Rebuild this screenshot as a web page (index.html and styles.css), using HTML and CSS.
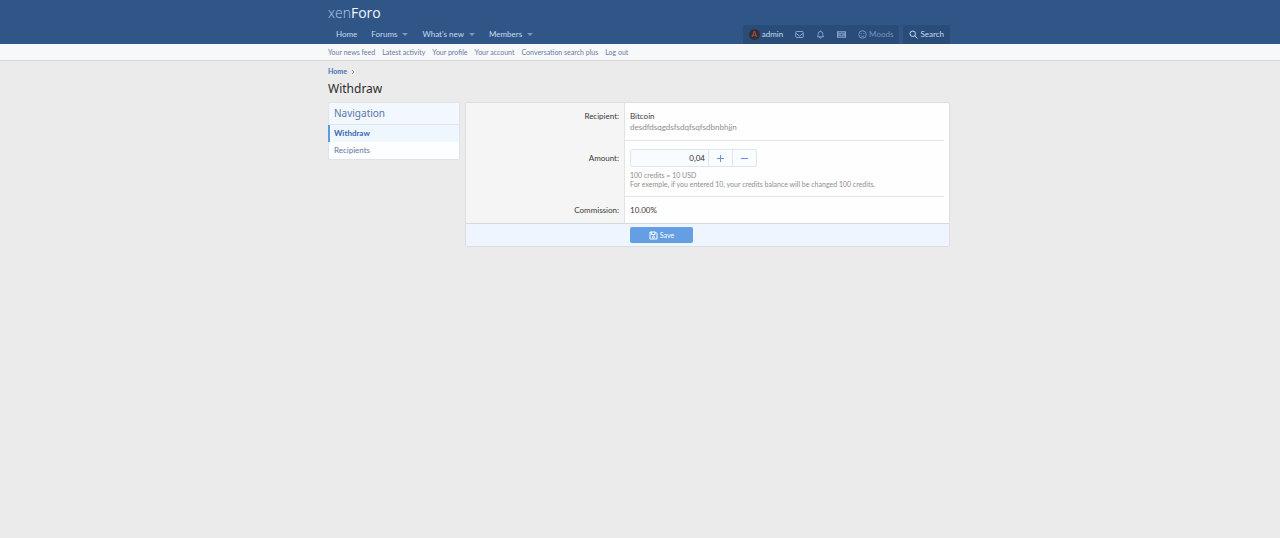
FILE: index.html
```html
<!DOCTYPE html>
<html lang="en">
<head>
<meta charset="utf-8">
<meta name="viewport" content="width=device-width, initial-scale=1">
<title>Withdraw</title>
<link rel="stylesheet" href="styles.css">
</head>
<body>
<header class="header">
  <div class="inner">
    <a class="logo" href="#"><span class="logo-thin">xen</span>Foro</a>
    <div class="nav-row">
      <nav class="nav">
        <a href="#">Home</a>
        <a href="#">Forums<i class="caret"></i></a>
        <a href="#">What's new<i class="caret"></i></a>
        <a href="#">Members<i class="caret"></i></a>
      </nav>
      <div class="tools">
        <div class="tool-group">
          <a class="tool tool-user" href="#"><span class="avatar">A</span>admin</a>
          <a class="tool" href="#" aria-label="Inbox"><svg class="icon" viewBox="0 0 18 18"><rect x="1.5" y="3" width="15" height="12" rx="1.5"/><path d="M1.5 6.5 9 12l7.500-5.500"/></svg></a>
          <a class="tool" href="#" aria-label="Alerts"><svg class="icon" viewBox="0 0 18 18"><path d="M2.500 13.500h13c-1.500-1.500-2-3-2-6a4.500 4.500 0 0 0-9 0c0 3-.5 4.500-2 6zM9 1v2M7 14.500a2 2 0 0 0 4 0"/></svg></a>
          <a class="tool" href="#" aria-label="Credits"><svg class="icon" viewBox="0 0 18 18"><rect x="1" y="3.500" width="16" height="11"/><rect x="6" y="6.500" width="6" height="5"/><path d="M3.500 5v8M14.500 5v8"/></svg></a>
          <a class="tool tool-mood" href="#"><svg class="icon" viewBox="0 0 18 18"><circle cx="9" cy="9" r="7.500"/><path d="M6.300 6v2M11.700 6v2M5.500 11c1.500 2.500 5.500 2.500 7 0"/></svg>Moods</a>
        </div>
        <a class="tool tool-search" href="#"><svg class="icon" viewBox="0 0 18 18"><circle cx="7.500" cy="7.500" r="5.500"/><path d="m11.500 11.500 5.500 5.500"/></svg>Search</a>
      </div>
    </div>
  </div>
</header>
<div class="subnav">
  <nav class="inner subnav-list">
    <a href="#">Your news feed</a>
    <a href="#">Latest activity</a>
    <a href="#">Your profile</a>
    <a href="#">Your account</a>
    <a href="#">Conversation search plus</a>
    <a href="#">Log out</a>
  </nav>
</div>
<main class="inner">
  <nav class="crumbs"><a href="#">Home</a><svg class="crumb-arrow" viewBox="0 0 4 6"><path d="m1 1 2 2-2 2"/></svg></nav>
  <h1 class="title">Withdraw</h1>
  <div class="columns">
    <aside class="side">
      <h2 class="side-title">Navigation</h2>
      <a class="side-link side-link-on" href="#">Withdraw</a>
      <a class="side-link" href="#">Recipients</a>
    </aside>
    <form class="form">
      <div class="row">
        <div class="label">Recipient:</div>
        <div class="value"><div>Bitcoin</div><div class="muted">desdfdsqgdsfsdqfsqfsdbnbhjjn</div></div>
      </div>
      <div class="row">
        <label class="label label-field" for="amount">Amount:</label>
        <div class="value">
          <div class="stepper">
            <input id="amount" type="text" value="0,04">
            <button type="button" aria-label="Increase"><svg class="sign" viewBox="0 0 7 7"><path d="M0 3.500h7M3.500 0v7"/></svg></button>
            <button type="button" aria-label="Decrease"><svg class="sign" viewBox="0 0 7 7"><path d="M0 3.500h7"/></svg></button>
          </div>
          <p class="hint">100 credits = 10 USD<br>For exemple, if you entered 10, your credits balance will be changed 100 credits.</p>
        </div>
      </div>
      <div class="row">
        <div class="label">Commission:</div>
        <div class="value">10.00%</div>
      </div>
      <div class="submit">
        <button class="save" type="submit"><svg class="icon" viewBox="0 0 18 18"><path d="M2 2h11l3 3v11H2zM5 2v5h7V2"/><circle cx="9" cy="12" r="2"/></svg>Save</button>
      </div>
    </form>
  </div>
</main>
</body>
</html>
```
FILE: styles.css
```css
* { box-sizing: border-box; }
body {
  margin: 0;
  background: #ebebeb;
  color: #3a3a3a;
  font: 8px/11px Lato, "Noto Sans", sans-serif;
}
a { color: inherit; text-decoration: none; }
.inner { max-width: 622px; margin: 0 auto; position: relative; right: 1px; }
.header { background: #2f5687; color: #c5dbf3; }
.logo {
  display: block;
  width: max-content;
  padding: 4px 0 2px;
  color: #f2f7fc;
  font: 14px/18px "Open Sans", sans-serif;
}
.logo-thin { color: #b3cae6; font-weight: 300; }
.nav-row { display: flex; justify-content: space-between; align-items: flex-end; }
.nav { display: flex; gap: 14px; padding-left: 8px; line-height: 20px; }
.nav a { display: flex; align-items: center; gap: 5px; }
.caret {
  border: 3px solid transparent;
  border-top-color: #7898c2;
  border-bottom: 0;
}
.tools { display: flex; gap: 4px; line-height: 19px; }
.tool-group { display: flex; background: #2a4c78; border-radius: 2px 2px 0 0; }
.tool { display: flex; align-items: center; gap: 2px; padding: 0 6px; color: #86a5cc; }
.tool-user { color: #c5dbf3; }
.tool-mood { color: #7796bd; }
.tool-search { background: #2a4c78; color: #c5dbf3; border-radius: 2px 2px 0 0; }
.avatar {
  width: 11px;
  height: 11px;
  border-radius: 50%;
  background: #333036;
  color: #b8554a;
  line-height: 11px;
  text-align: center;
}
.icon { width: 9px; height: 9px; fill: none; stroke: currentColor; stroke-width: 2; }
.subnav { background: #f7f8fa; border-bottom: 1px solid #d5d6d8; color: #6b7ba3; }
.subnav-list { display: flex; gap: 7px; font-size: 7px; line-height: 16px; }
.crumbs {
  display: flex;
  align-items: center;
  gap: 4px;
  padding-top: 5px;
  color: #4470b4;
  font-size: 7px;
  font-weight: 700;
}
.crumb-arrow { width: 4px; height: 6px; fill: none; stroke: #8a9cae; }
.title {
  margin: 4px 0 5px;
  color: #2c2c2c;
  font: 12px/16px "Noto Sans", sans-serif;
}
.columns { display: flex; align-items: flex-start; gap: 5px; }
.side {
  flex: 0 0 132px;
  background: #fdfeff;
  border: 1px solid #e0e3e8;
  border-radius: 2px;
  color: #6279a6;
}
.side-title {
  margin: 0;
  padding: 0 5px;
  background: #f3f8fe;
  border-bottom: 1px solid #dfe7f0;
  color: #5576af;
  font: 10px/21px "Noto Sans", sans-serif;
}
.side-link { display: block; padding: 0 5px; line-height: 17px; }
.side-link-on {
  margin-left: -1px;
  padding-left: 4px;
  background: #eff7fe;
  border-left: 2px solid #5a9be8;
  color: #3d66ac;
  font-weight: 700;
}
.form { flex: 1; background: #fefefe; border: 1px solid #dcdee1; border-radius: 2px; }
.row { display: flex; padding-right: 5px; }
.label {
  flex: 0 0 159px;
  padding: 8px 5px 7px;
  background: #f5f5f5;
  border-right: 1px solid #e2e3e5;
  text-align: right;
}
.value { flex: 1; padding: 8px 0 7px 5px; }
.row + .row .label { padding-top: 9px; }
.row + .row .label-field { padding-top: 13px; }
.row + .row .value { border-top: 1px solid #e3e4e6; }
.muted { color: #8e8e8e; }
.stepper {
  display: flex;
  width: 127px;
  height: 18px;
  border: 1px solid #dde7f1;
  border-radius: 2px;
  background: #fafdff;
}
.stepper input {
  flex: 1;
  min-width: 0;
  padding: 0 3px;
  border: 0;
  background: #f8fcff;
  color: #2c2c2c;
  font: inherit;
  text-align: right;
}
.stepper button {
  display: grid;
  place-items: center;
  width: 24px;
  padding: 0;
  border: 0;
  border-left: 1px solid #dde7f1;
  background: none;
}
.sign { width: 7px; height: 7px; stroke: #6f8ee0; }
.hint { margin: 4px 0 0; color: #8e8e8e; font-size: 7px; line-height: 9px; }
.submit { padding: 3px 0 3px 164px; background: #eef5fe; border-top: 1px solid #d3d9e1; }
.save {
  display: flex;
  align-items: center;
  justify-content: center;
  gap: 2px;
  width: 63px;
  height: 16px;
  padding: 0;
  border: 0;
  border-radius: 2px;
  background: #649fe4;
  color: #fff;
  font: 7px/16px Lato, sans-serif;
}
```
